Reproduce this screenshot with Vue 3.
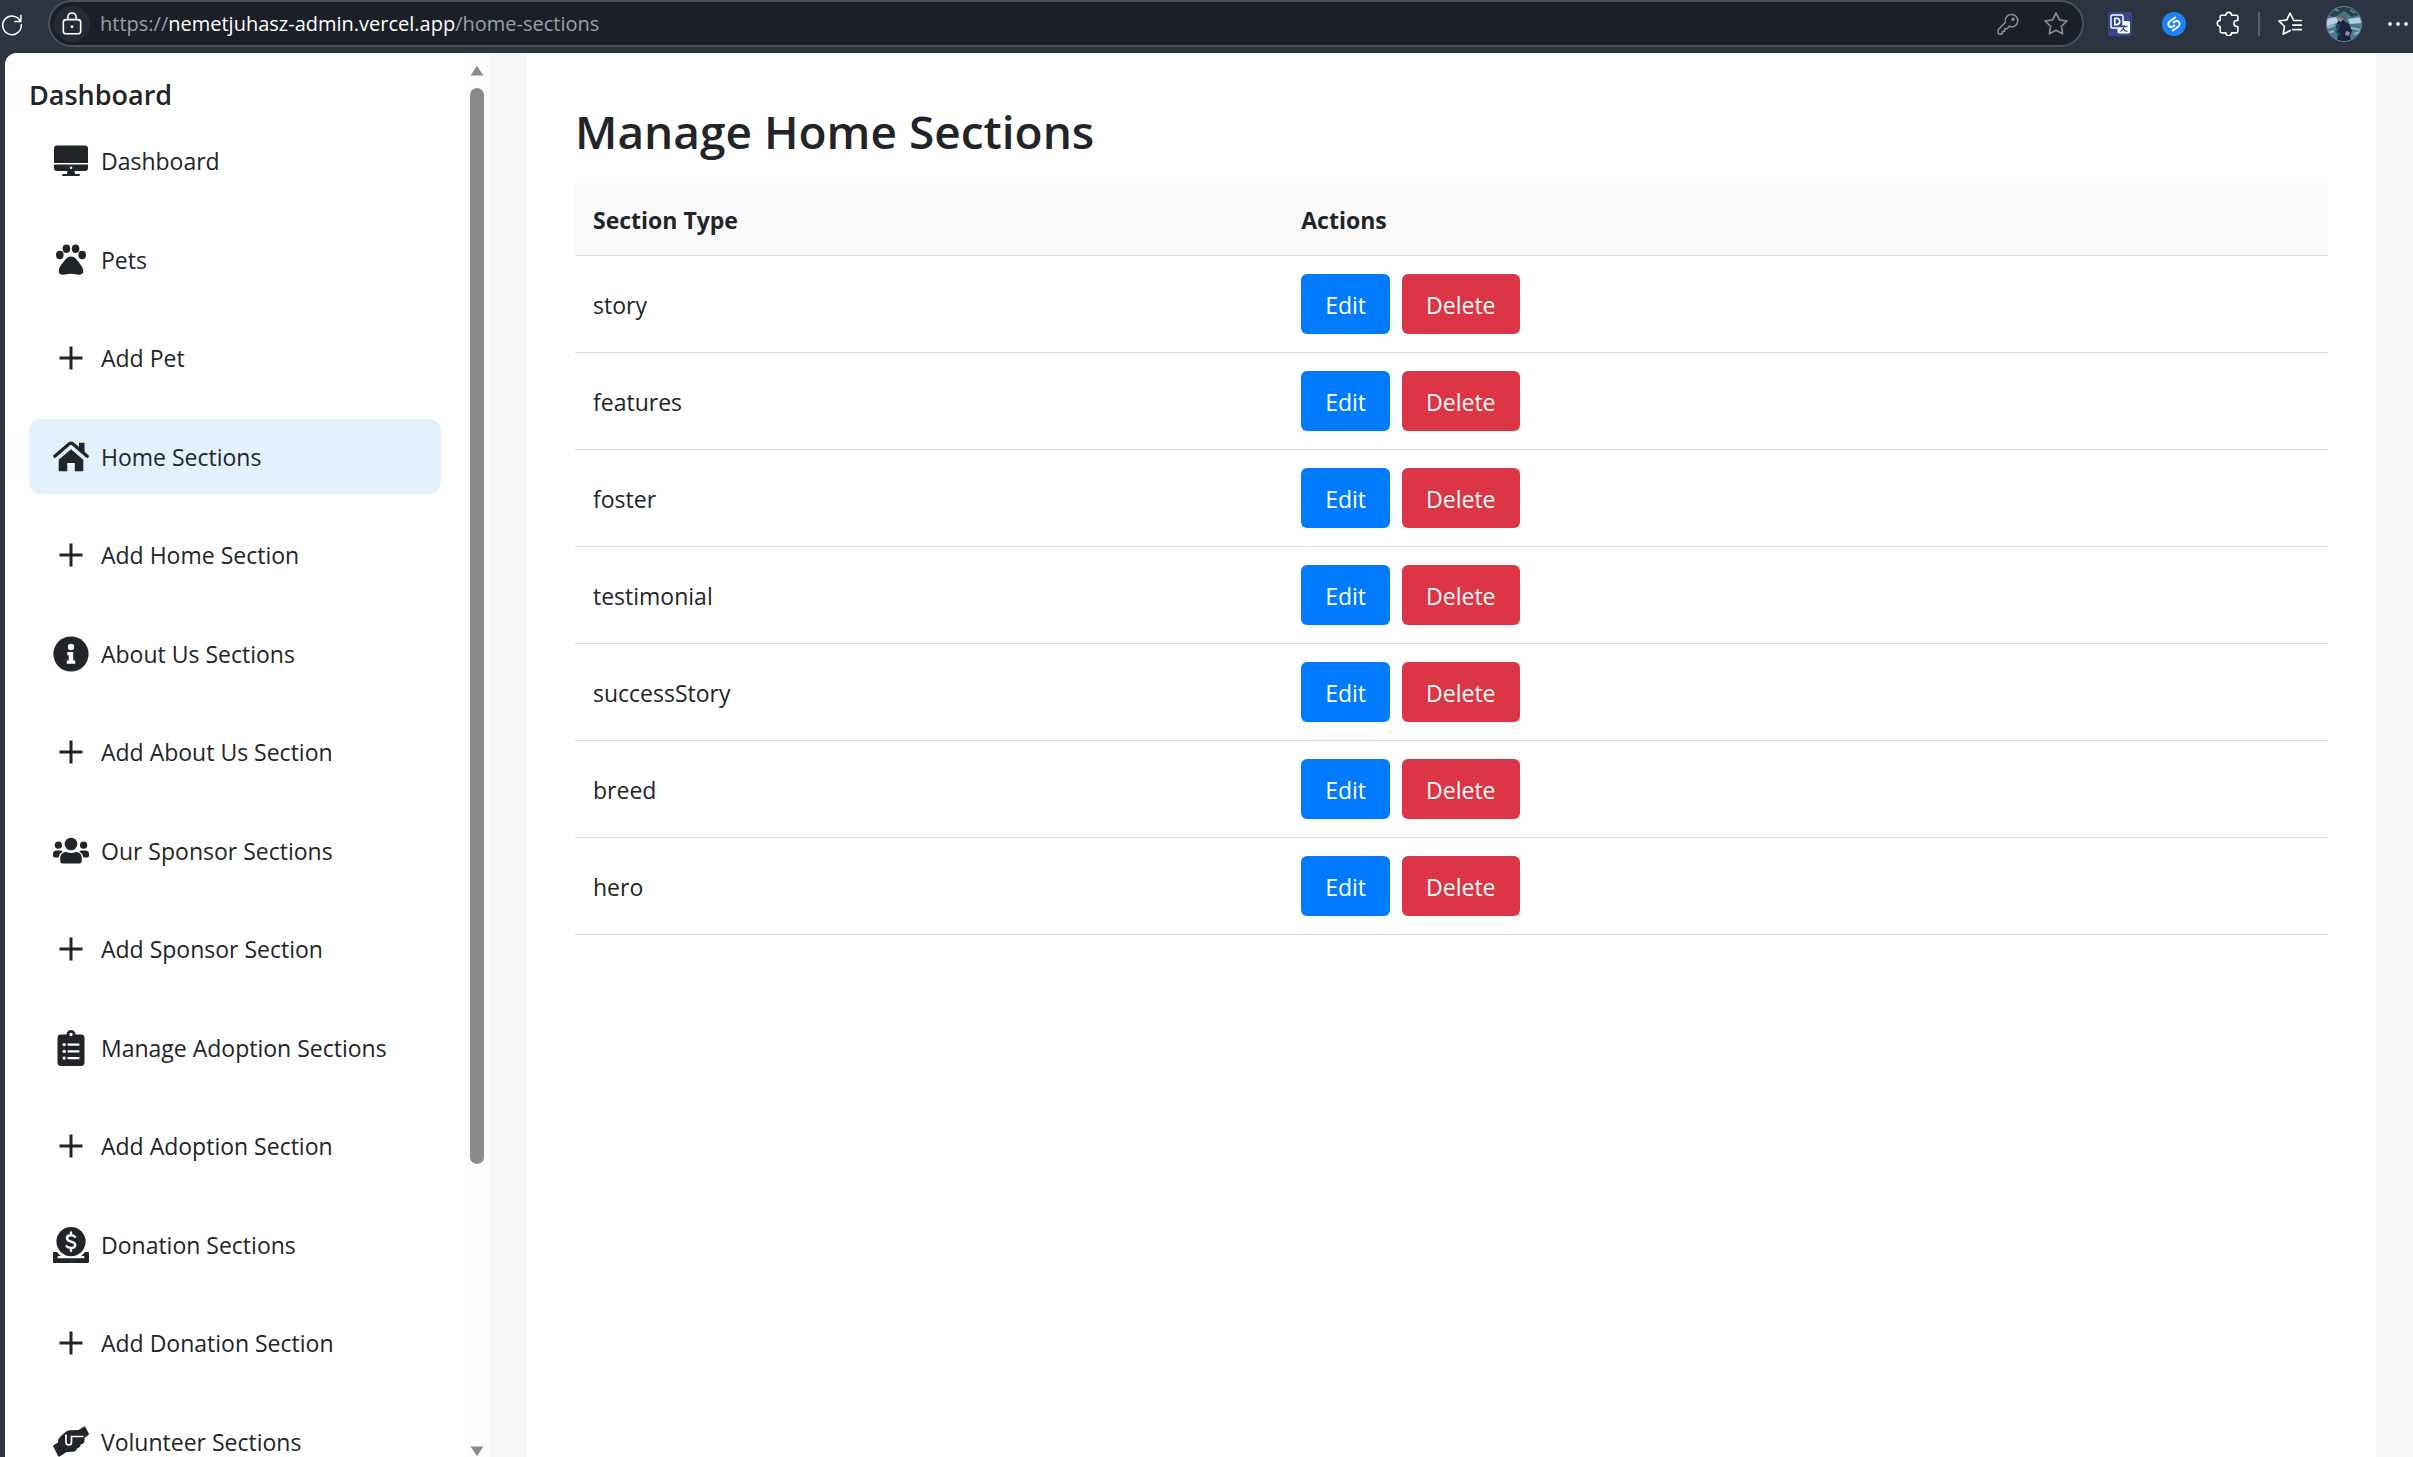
<script setup>
const navItems = [
  { label: 'Dashboard', icon: 'desktop' },
  { label: 'Pets', icon: 'paw' },
  { label: 'Add Pet', icon: 'plus' },
  { label: 'Home Sections', icon: 'home', active: true },
  { label: 'Add Home Section', icon: 'plus' },
  { label: 'About Us Sections', icon: 'info' },
  { label: 'Add About Us Section', icon: 'plus' },
  { label: 'Our Sponsor Sections', icon: 'users' },
  { label: 'Add Sponsor Section', icon: 'plus' },
  { label: 'Manage Adoption Sections', icon: 'clipboard' },
  { label: 'Add Adoption Section', icon: 'plus' },
  { label: 'Donation Sections', icon: 'donate' },
  { label: 'Add Donation Section', icon: 'plus' },
  { label: 'Volunteer Sections', icon: 'hands' },
]

const sections = ['story', 'features', 'foster', 'testimonial', 'successStory', 'breed', 'hero']
</script>

<template>
  <div class="browser">
    <header class="toolbar">
      <button class="tool reload" aria-label="Reload">
        <svg viewBox="0 0 24 24" width="28" height="28" class="line">
          <path d="M20.5 9.5A9.3 9.3 0 1 0 21.3 12.6M20.9 3.2v6.3h-6.2" />
        </svg>
      </button>
      <div class="address">
        <span class="lock">
          <svg viewBox="0 0 24 24" width="26" height="26" class="line">
            <rect x="4" y="8" width="16" height="13" rx="2.4" />
            <path d="M8.2 8V5.6a3.8 3.8 0 0 1 7.6 0V8" />
            <circle cx="12" cy="14.5" r="1.3" fill="currentColor" stroke="none" />
          </svg>
        </span>
        <p class="url">https://<b>nemetjuhasz-admin.vercel.app</b>/home-sections</p>
        <button class="tool dim" aria-label="Saved passwords">
          <svg viewBox="0 0 24 24" width="24" height="24" class="line">
            <path d="M15.3 2.6a6.1 6.1 0 0 0-5.9 7.8L2.6 17.2a1.5 1.5 0 0 0-.4 1V21c0 .6.5 1 1 1h3v-2.6h2.5v-2.7h2.4l2.2-2.4a6.1 6.1 0 1 0 2-11.7z" />
            <circle cx="17" cy="7.2" r="1" fill="currentColor" />
          </svg>
        </button>
        <button class="tool dim" aria-label="Add to favorites">
          <svg viewBox="0 0 24 24" width="26" height="26" class="line">
            <path d="M12 1.8l3.1 6.4 7 1-5.1 4.9 1.2 7-6.2-3.3-6.2 3.3 1.2-7L1.9 9.2l7-1z" />
          </svg>
        </button>
      </div>
      <div class="extensions">
        <button class="tool" aria-label="Translate">
          <svg viewBox="0 0 24 24" width="24" height="24">
            <rect width="24" height="24" rx="3" fill="#33478c" />
            <rect x="9.5" y="9" width="12.5" height="12.5" rx="1.5" fill="#fff" />
            <rect x="3" y="3" width="12" height="13" rx="1.5" fill="#33478c" stroke="#fff" stroke-width="1.4" />
            <path d="M6.8 6.2h1.7a3.2 3.2 0 0 1 0 6.4H6.8z" fill="none" stroke="#fff" stroke-width="1.6" />
            <path d="M12.5 14.5h7M16 13v1.5c-.4 2.4-1.7 4-3.6 5M14.8 16.3c1 1.7 2.5 2.9 4.7 3.4" fill="none" stroke="#33478c" stroke-width="1.3" />
          </svg>
        </button>
        <button class="tool" aria-label="Shazam">
          <svg viewBox="0 0 24 24" width="24" height="24">
            <circle cx="12" cy="12" r="12" fill="#1a82f7" />
            <path d="M13.2 5.4 7.6 9.6c-3 2.6.2 7.2 3.2 5l1.600-1.200M10.800 18.600l5.600-4.200c3-2.600-.2-7.200-3.200-5l-1.600 1.200" fill="none" stroke="#fff" stroke-width="1.9" stroke-linecap="round" />
          </svg>
        </button>
        <button class="tool" aria-label="Extensions">
          <svg viewBox="0 0 24 24" width="25" height="25" class="line">
            <path d="M5.5 4h4a2.7 2.7 0 0 1 5.400 0h4.600a1.500 1.500 0 0 1 1.500 1.500v3.700h-1a2.800 2.800 0 0 0 0 5.600h1v4.700a1.500 1.500 0 0 1-1.500 1.500h-4.600a2.700 2.700 0 0 1-5.400 0h-4A1.500 1.500 0 0 1 4 19.500v-4.700a2.800 2.800 0 0 1 0-5.600V5.500A1.500 1.500 0 0 1 5.500 4z" />
          </svg>
        </button>
        <span class="divider"></span>
        <button class="tool" aria-label="Favorites">
          <svg viewBox="0 0 24 24" width="26" height="26" class="line">
            <path d="M22.5 8.8h-7L12 2 9 8.2l-7.3 1 5.2 5-1.2 7.3 6.5-3.5M14.5 13h8M14.5 17.2h8" />
          </svg>
        </button>
        <button class="tool" aria-label="Profile">
          <svg viewBox="0 0 36 36" width="36" height="36">
            <defs>
              <clipPath id="avatar-clip"><circle cx="18" cy="18" r="17.5" /></clipPath>
            </defs>
            <g clip-path="url(#avatar-clip)">
              <rect width="36" height="36" fill="#47798f" />
              <path d="M0 0h36v8l-10 3-8-6-9 6-9-2z" fill="#26424f" />
              <path d="M8 3l5 2M24 4l5 3" stroke="#4b8aa0" stroke-width="2" />
              <path d="M0 13l10-2 3 5-13 5zM22 13l14-2v6l-12 1z" fill="#b5d0da" />
              <path d="M1 22l8-3M25 22l10 2M2 27l6-2M28 28l6-2" stroke="#8fb5c4" stroke-width="2" />
              <path d="M12 15l5-1 6 4 3 7-2 5 1 6H11l1-9-2-6z" fill="#16263e" />
              <path d="M11.5 11l5 1-1 4-3-1z" fill="#a5808a" />
              <path d="M12.5 11q0-4 5-4.5 4 1 4.5 5l-3 3-2-2.5z" fill="#5d6a6d" />
              <path d="M20 25l4 1-1 4-4-1z" fill="#b67c9a" />
              <path d="M13 18l-2 8 3 3" stroke="#1f4d76" stroke-width="2" fill="none" />
            </g>
            <circle cx="18" cy="18" r="17.5" fill="none" stroke="#70808b" />
          </svg>
        </button>
        <button class="tool" aria-label="Settings and more">
          <svg viewBox="0 0 24 24" width="24" height="24" fill="currentColor">
            <circle cx="4" cy="12" r="1.9" /><circle cx="12" cy="12" r="1.9" /><circle cx="20" cy="12" r="1.9" />
          </svg>
        </button>
      </div>
    </header>

    <div class="page">
      <aside class="sidebar">
        <nav class="nav">
          <h2 class="nav-title">Dashboard</h2>
          <ul class="nav-list">
            <li v-for="item in navItems" :key="item.label">
              <a href="#" class="nav-link" :class="{ active: item.active, sub: item.icon === 'plus' }">
                <svg v-if="item.icon === 'desktop'" class="icon" viewBox="0 0 36 36">
                  <path d="M4 2.5h28a3 3 0 0 1 3 3V20H1V5.5a3 3 0 0 1 3-3z" />
                  <path fill-rule="evenodd" d="M1 21.500h34V25a3 3 0 0 1-3 3H21.500l.6 3H26a1 1 0 0 1 0 2H10a1 1 0 0 1 0-2h3.900l.6-3H4a3 3 0 0 1-3-3zM18 23.500a1.300 1.300 0 1 0 0 2.600 1.300 1.300 0 0 0 0-2.600z" />
                </svg>
                <svg v-else-if="item.icon === 'paw'" class="icon" viewBox="0 0 36 36">
                  <ellipse cx="6.8" cy="13" rx="3.8" ry="4.2" />
                  <ellipse cx="13.4" cy="6.8" rx="3.8" ry="4.2" />
                  <ellipse cx="22.6" cy="6.8" rx="3.8" ry="4.2" />
                  <ellipse cx="29.2" cy="13" rx="3.8" ry="4.2" />
                  <path d="M18 14.500c2.300 0 4 1 5.500 3 2 2.700 6.800 7.300 6.800 11.500 0 2.500-1.700 3.700-4 3.700-2.800 0-5-.9-8.300-.9s-5.500.9-8.300.9c-2.300 0-4-1.200-4-3.700 0-4.200 4.800-8.800 6.800-11.500 1.500-2 3.200-3 5.500-3z" />
                </svg>
                <svg v-else-if="item.icon === 'home'" class="icon" viewBox="0 0 36 36">
                  <path d="M18 10.200l12.300 10.500V31a1.200 1.200 0 0 1-1.200 1.200h-7.300V24h-7.600v8.200H6.900A1.200 1.200 0 0 1 5.700 31V20.700z" />
                  <path d="M1.800 17.200L16 5a3 3 0 0 1 4 0l14.200 12.200" fill="none" stroke="currentColor" stroke-width="3.2" stroke-linecap="round" />
                  <path d="M26 3.700h5.500v11l-5.500-4.500z" />
                </svg>
                <svg v-else-if="item.icon === 'info'" class="icon" viewBox="0 0 36 36">
                  <circle cx="18" cy="18" r="17.6" />
                  <g fill="#fff"><circle cx="18" cy="11" r="3.2" /><path d="M14.300 16h6v8.500h1.900v3.200h-8.400v-3.200h1.900v-5.300h-1.400z" /></g>
                </svg>
                <svg v-else-if="item.icon === 'users'" class="icon" viewBox="0 0 36 36">
                  <circle cx="18" cy="11" r="6.300" /><circle cx="5.400" cy="12.200" r="3.600" /><circle cx="30.600" cy="12.200" r="3.600" />
                  <path d="M13.300 19.100c3 1.200 6.400 1.200 9.400 0 4 0 6.100 2.700 6.100 6.500v2.200a2.700 2.700 0 0 1-2.700 2.700H9.900a2.700 2.700 0 0 1-2.700-2.700v-2.200c0-3.800 2.100-6.500 6.100-6.500z" />
                  <path d="M3.600 17.400h3.600q1.400 0 2.500 1.100Q6.200 20.500 5.600 24.500H1.800A1.800 1.800 0 0 1 0 22.700v-1.700a3.600 3.600 0 0 1 3.600-3.600zM32.400 17.400h-3.600q-1.400 0-2.500 1.100 3.500 2 4.100 6h3.800a1.800 1.800 0 0 0 1.800-1.800v-1.700a3.600 3.600 0 0 0-3.600-3.600z" />
                </svg>
                <svg v-else-if="item.icon === 'clipboard'" class="icon" viewBox="0 0 36 36">
                  <path fill-rule="evenodd" d="M7.900 4.500h5.600a4.500 4.500 0 0 1 9 0h5.600a3.400 3.400 0 0 1 3.400 3.400v24.700a3.400 3.400 0 0 1-3.400 3.400H7.900a3.400 3.400 0 0 1-3.400-3.400V7.900a3.400 3.400 0 0 1 3.400-3.400zM18 2.800a1.700 1.700 0 1 0 0 3.400 1.700 1.700 0 0 0 0-3.400z" />
                  <g fill="#fff">
                    <circle cx="11.200" cy="14.600" r="1.700" /><circle cx="11.200" cy="21.400" r="1.700" /><circle cx="11.200" cy="28.100" r="1.700" />
                    <path d="M14.600 13.500h11.800v2.200H14.600zM14.600 20.300h11.800v2.200H14.600zM14.600 27h11.800v2.200H14.600z" />
                  </g>
                </svg>
                <svg v-else-if="item.icon === 'donate'" class="icon" viewBox="0 0 36 36">
                  <circle cx="18" cy="14.600" r="14.600" />
                  <path d="M22 9.800c-1-1-2.300-1.500-4-1.500-2.300 0-4 1.100-4 3 0 4.300 8.200 2.200 8.200 6.500 0 2-1.800 3.200-4.200 3.200-1.800 0-3.400-.6-4.400-1.700M18 5.500v2.800M18 21v2.800" fill="none" stroke="#fff" stroke-width="2.400" stroke-linecap="round" />
                  <path fill-rule="evenodd" d="M1.200 25H4c1.100 1.600 2.400 3 4 4.100H5.200a.6.600 0 0 0-.6.600v1c0 .4.300.6.600.6h25.600c.3 0 .6-.2.600-.6v-1a.6.600 0 0 0-.6-.6H28c1.600-1.100 2.900-2.500 4-4.100h2.800c.7 0 1.200.6 1.200 1.200v8.500c0 .7-.5 1.300-1.200 1.300H1.200C.5 36 0 35.400 0 34.700v-8.500C0 25.600.5 25 1.200 25z" />
                </svg>
                <svg v-else-if="item.icon === 'hands'" class="icon" viewBox="0 0 36 36">
                  <path d="M12.500 8Q14 6.500 17 6.300l8.500-.3 5.200-3.200q1.200-.8 1.800.4l3.200 6q.5 1-.4 1.700L31.500 14q.6 6-3.700 6.200-.3 3.500-3.700 4-.8 3.500-4.600 3.500l-6 .2-6.500 4.400q-1.200.8-1.900-.3L.4 22.800q-.6-1.100.5-1.700L5 18.500q-.4-3.500 2.500-6z" />
                  <path d="M13 10.500v7.500q0 3 2.800 3 2.700 0 2.700-3V12.500h12" fill="none" stroke="#fff" stroke-width="1.700" />
                </svg>
                <svg v-else class="icon" viewBox="0 0 36 36">
                  <path d="M18 6.500v23M6.500 18h23" fill="none" stroke="currentColor" stroke-width="3" />
                </svg>
                <span>{{ item.label }}</span>
              </a>
            </li>
          </ul>
        </nav>
        <div class="scrollbar" aria-hidden="true">
          <svg viewBox="0 0 14 11" width="14" height="11"><path d="M7 .8 13.4 10.500H.6z" /></svg>
          <span class="thumb"></span>
          <svg viewBox="0 0 14 11" width="14" height="11"><path d="M7 10.2 13.4.5H.6z" /></svg>
        </div>
      </aside>

      <main class="content">
        <h1 class="heading">Manage Home Sections</h1>
        <table class="sections">
          <thead>
            <tr>
              <th scope="col" class="type">Section Type</th>
              <th scope="col">Actions</th>
            </tr>
          </thead>
          <tbody>
            <tr v-for="name in sections" :key="name">
              <td class="name">{{ name }}</td>
              <td>
                <div class="actions">
                  <button type="button" class="btn edit">Edit</button>
                  <button type="button" class="btn delete">Delete</button>
                </div>
              </td>
            </tr>
          </tbody>
        </table>
      </main>
    </div>
  </div>
</template>

<style>
body {
  margin: 0;
  overflow: hidden;
}
</style>

<style scoped>
.browser {
  display: flex;
  flex-direction: column;
  height: 100vh;
  background: #2b3440;
  color: #212529;
  font-family: 'Open Sans', 'Noto Sans', sans-serif;
  font-size: 23px;
  line-height: 36px;
}

button {
  font: inherit;
  border: 0;
}

.toolbar {
  flex: none;
  display: flex;
  align-items: flex-start;
  height: 53px;
  color: #fff;
}

.line {
  fill: none;
  stroke: currentColor;
  stroke-width: 1.5;
  stroke-linecap: round;
  stroke-linejoin: round;
}

.tool {
  display: flex;
  align-items: center;
  justify-content: center;
  width: 36px;
  height: 47px;
  padding: 0;
  background: none;
  color: inherit;
}

.tool.dim {
  width: 48px;
  color: #8a8e94;
}

.tool.reload {
  width: 48px;
  padding-right: 24px;
}

.address {
  flex: 1;
  display: flex;
  align-items: center;
  box-sizing: border-box;
  height: 47px;
  padding-right: 2px;
  border: 2px solid #4a5059;
  border-radius: 24px;
  background: #1b1f28;
}

.lock {
  display: flex;
  align-items: center;
  justify-content: center;
  width: 36px;
  height: 36px;
  margin-left: 4px;
  border-radius: 50%;
  background: #262a33;
}

.url {
  flex: 1;
  margin: 0 0 0 10px;
  color: #9b9ea3;
  font-size: 20px;
}

.url b {
  color: #fff;
  font-weight: 400;
}

.extensions {
  display: flex;
  align-items: center;
  gap: 18px;
  margin-right: -3px;
  padding-left: 18px;
}

.divider {
  width: 2px;
  height: 24px;
  margin: 0 -6px;
  background: #59616b;
}

.page {
  flex: 1;
  display: flex;
  min-height: 0;
  margin-left: 5px;
  border-top-left-radius: 12px;
  overflow: hidden;
  background: #f7f7f7;
}

.sidebar {
  flex: none;
  display: flex;
  width: 484px;
  background: #fff;
}

.nav {
  flex: 1;
  padding: 24px;
  line-height: 24px;
}

.nav-title {
  margin: 0 0 10px;
  font-size: 27px;
  font-weight: 600;
  line-height: 36px;
}

.nav-list {
  display: flex;
  flex-direction: column;
  gap: 24px;
  margin: 0;
  padding: 0;
  list-style: none;
}

.nav-link {
  display: flex;
  align-items: center;
  gap: 12px;
  box-sizing: border-box;
  height: 75px;
  padding: 0 24px;
  border-radius: 12px;
  color: inherit;
  text-decoration: none;
  white-space: nowrap;
}

.nav-link.sub {
  height: 74px;
}

.nav-link.active {
  background: #e3f0fe;
}

.icon {
  flex: none;
  width: 36px;
  height: 36px;
  fill: currentColor;
}

.scrollbar {
  display: flex;
  flex-direction: column;
  align-items: center;
  justify-content: space-between;
  gap: 12px;
  box-sizing: border-box;
  width: 24px;
  padding: 12px 0 0;
  background: #fcfcfc;
  fill: #8b8b8b;
}

.thumb {
  width: 14px;
  height: 77.3%;
  margin-bottom: auto;
  border-radius: 7px;
  background: #8b8b8b;
}

.content {
  flex: 1;
  margin: 0 37px 0 38px;
  padding: 48px;
  background: #fff;
}

.heading {
  margin: 0 0 22px;
  font-size: 46px;
  font-weight: 600;
  line-height: 60px;
}

.sections {
  width: 100%;
  border-collapse: collapse;
}

th,
td {
  padding: 18px;
  border-bottom: 1px solid #dcdddf;
  text-align: left;
}

th,
.name {
  padding-top: 19px;
  padding-bottom: 17px;
}

th {
  background: #f9f9f9;
  font-weight: 700;
}

.type {
  width: 40.4%;
}

.actions {
  display: flex;
  gap: 12px;
}

.btn {
  padding: 13px 24px 11px;
  border-radius: 6px;
  color: #fff;
}

.edit {
  background: #007bff;
}

.delete {
  background: #dc3545;
}
</style>
